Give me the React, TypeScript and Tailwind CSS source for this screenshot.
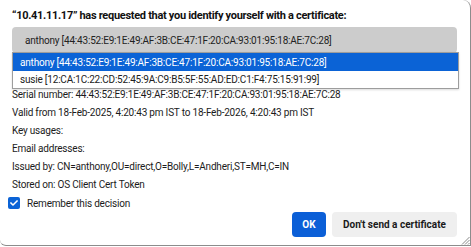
import { FaCheck } from "react-icons/fa";

const details = [
  "Serial number: 44:43:52:E9:1E:49:AF:3B:CE:47:1F:20:CA:93:01:95:18:AE:7C:28",
  "Valid from 18-Feb-2025, 4:20:43 pm IST to 18-Feb-2026, 4:20:43 pm IST",
  "Key usages:",
  "Email addresses:",
  "Issued by: CN=anthony,OU=direct,O=Bolly,L=Andheri,ST=MH,C=IN",
  "Stored on: OS Client Cert Token",
];

const certs = [
  "anthony [44:43:52:E9:1E:49:AF:3B:CE:47:1F:20:CA:93:01:95:18:AE:7C:28]",
  "susie [12:CA:1C:22:CD:52:45:9A:C9:B5:5F:55:AD:ED:C1:F4:75:15:91:99]",
];

export default function App() {
  return (
    <div className="relative h-[247px] w-[471px] overflow-hidden bg-white font-['Roboto',sans-serif] text-[10px] tracking-[-0.2px] text-[#1c1c1c]">
      <div className="h-[246px] rounded-tr-[8px] rounded-bl-[6px] border-b border-r border-[#8c8c8c] px-3 pt-[7px]">
        <h1 className="whitespace-nowrap text-[11px] font-bold leading-[18px] tracking-[-0.3px] text-[#111]">
          “10.41.11.17” has requested that you identify yourself with a certificate:
        </h1>

        <div className="mt-[2px] flex h-[26px] w-[445px] items-center whitespace-nowrap rounded-[4px] bg-[#cccccc] px-[13px] text-[#222]">
          {certs[0]}
        </div>

        <div className="relative">
          {/* room for the lines hidden under the open list */}
          <div className="h-[33px]" />

          {details.map((line) => (
            <div key={line} className="h-[18px] whitespace-nowrap leading-[18px]">
              {line}
            </div>
          ))}

          <label className="-ml-[4px] flex h-[18px] items-center gap-[7px]">
            <span className="flex h-[12px] w-[12px] items-center justify-center rounded-[2px] bg-[#0b63d6] text-white">
              <FaCheck className="text-[8px]" />
            </span>
            Remember this decision
          </label>

          <div className="flex justify-end gap-[6px] pr-px">
            <button className="h-[25px] w-[34px] rounded-[4px] bg-[#0b5fd7] text-[10px] font-bold tracking-normal text-white">
              OK
            </button>
            <button className="h-[25px] w-[125px] whitespace-nowrap rounded-[4px] bg-[#efefef] text-[10px] font-bold tracking-normal text-[#1a1a1a]">
              Don't send a certificate
            </button>
          </div>

          {/* open dropdown list */}
          <div className="absolute left-0 top-[-1px] w-[447px] border border-[#9d9d9d] bg-white shadow-[0_1px_2px_rgba(0,0,0,0.15)]">
            <div className="flex h-[18px] items-center whitespace-nowrap bg-[#0b63d6] px-[7px] text-white">{certs[0]}</div>
            <div className="flex h-[17px] items-center whitespace-nowrap px-[7px] text-[#222]">{certs[1]}</div>
          </div>
        </div>
      </div>

      <svg className="absolute bottom-[2px] right-[1px]" width="9" height="9" viewBox="0 0 9 9">
        <path d="M1 8.5 L8.5 1 M4 8.5 L8.5 4 M7 8.5 L8.5 7" stroke="#8a8a8a" strokeWidth="1" />
      </svg>
    </div>
  );
}
